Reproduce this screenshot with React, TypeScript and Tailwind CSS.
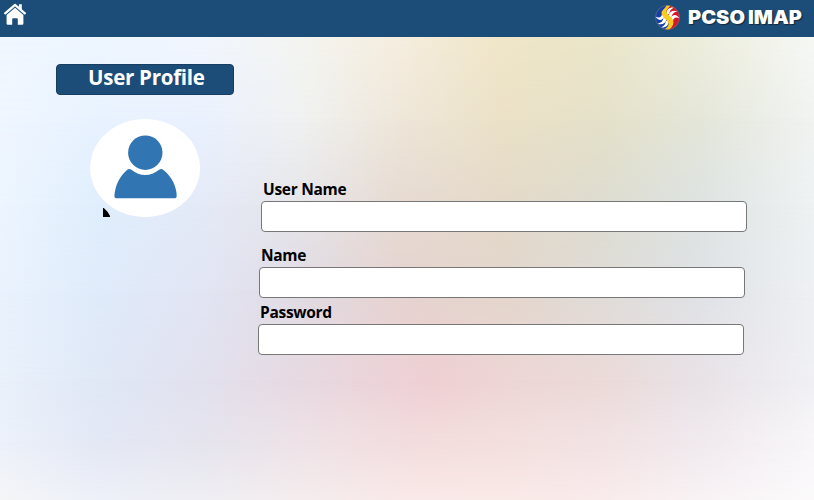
import React from "react";

const sweeps = [
  "M24 19C21 9 29 4 38 5C31 9 28 13 29 18Z",
  "M27 22C29 12 37 9 45 13C37 14 34 18 33 25Z",
  "M31 27C36 17 44 19 49 27C42 23 37 25 36 32Z",
];

function SwirlLogo() {
  return (
    <svg viewBox="0 0 50 50" className="block size-[25px]" aria-hidden="true">
      <defs>
        <clipPath id="disc">
          <circle cx="25" cy="25" r="24" />
        </clipPath>
      </defs>
      <g clipPath="url(#disc)">
        <path d="M25 0H0v50h25L30 34 20 16Z" fill="#123fae" />
        <path d="M25 0h25v50H25L30 34 20 16Z" fill="#d4152b" />
        <g fill="#fff">
          {sweeps.map((d) => <path key={d} d={d} />)}
          <g transform="rotate(180 25 25)">
            {sweeps.map((d) => <path key={d} d={d} />)}
          </g>
        </g>
        <path
          d="M22 0H31C29 5 23 8 23 13C24 20 37 25 37 35C36 43 31 47 27 50H18C24 45 28 42 27 37C26 30 13 25 13 15C14 9 24 5 22 0Z"
          fill="#fbcb1d"
        />
      </g>
      <circle cx="25" cy="25" r="24" fill="none" stroke="#98806f" strokeWidth="1" />
    </svg>
  );
}

function HomeIcon() {
  return (
    <svg viewBox="0 0 22 22" className="block size-[22px]" aria-hidden="true">
      <path d="M1.200 10.300 11 1.900l9.800 8.400" fill="none" stroke="#fff" strokeWidth="2.300" strokeLinecap="round" strokeLinejoin="round" />
      <path d="M15 1.300h2.800v6.500L15 5.400Z" fill="#fff" />
      <path d="M2.600 11.900 11 4.700l8.400 7.200V20.500q0 1.300-1.300 1.300h-4.300v-5.600q0-1-1-1H9.200q-1 0-1 1v5.600H3.900q-1.300 0-1.300-1.300Z" fill="#fff" />
    </svg>
  );
}

function Avatar() {
  return (
    <div className="relative ml-[34px] mt-6 h-[98px] w-[110px] rounded-[50%] bg-white">
      <svg viewBox="0 0 110 98" className="block size-full" fill="#3175b3" aria-hidden="true">
        <circle cx="55.300" cy="33.700" r="17.200" />
        <path d="M41 50.500Q55 61.500 69.500 50.500Q71.500 49.300 74 51.500C82 58 86.700 68 86.700 77Q86.700 79.300 84 79.300H27Q24.400 79.300 24.400 77C25 66 30 57 37 51Q39 49.300 41 50.500Z" />
      </svg>
      <svg viewBox="0 0 7 9" className="absolute left-[13px] top-[89px] h-[9px] w-[7px]" aria-hidden="true">
        <path d="M0 0h.8Q5 3.500 7 8v1H0Z" fill="#000" />
      </svg>
    </div>
  );
}

/* Soft colour wash: each band is a horizontal gradient that fades in over the one above it. */
function Wash() {
  return (
    <div className="absolute inset-0" aria-hidden="true">
      <div className="absolute inset-0 bg-[linear-gradient(90deg,#f0f7ff,#eef6ff_12%,#f2f6fe_25%,#f4f5f1_37%,#f6eedf_49%,#f0e6c8_62%,#ebe6ca_74%,#eeeedd_86%,#f6f8f5)]" />
      <div className="absolute inset-0 bg-[linear-gradient(90deg,#eff6ff,#e8f2ff_12%,#eaf1fe_25%,#f0f1f1_37%,#eee6d9_49%,#ebe1c7_62%,#e5e1c9_74%,#e4e6d9_86%,#f0f3f1)] [mask-image:linear-gradient(transparent_0px,black_83px)]" />
      <div className="absolute inset-0 bg-[linear-gradient(90deg,#edf5ff,#dfeefd_12%,#e4eaf7_25%,#e6e5e9_37%,#e6dad2_49%,#e4d9c9_62%,#dddcd0_74%,#dde3e2_86%,#eef2f3)] [mask-image:linear-gradient(transparent_83px,black_168px)]" />
      <div className="absolute inset-0 bg-[linear-gradient(90deg,#eaf2fd,#dfebfb_12%,#e2e5f4_25%,#e1dbe3_37%,#e6d3d0_49%,#e3d6cc_62%,#dfdcd8_74%,#dfe2e6_86%,#eef0f3)] [mask-image:linear-gradient(transparent_168px,black_253px)]" />
      <div className="absolute inset-0 bg-[linear-gradient(90deg,#e9f1fb,#e0e8f6_12%,#e2e1ee_25%,#e7d9e1_37%,#efcfd3_53%,#edd5d5_62%,#ebdad8_74%,#e8e2e7_86%,#f0f0f4)] [mask-image:linear-gradient(transparent_253px,black_343px)]" />
      <div className="absolute inset-0 bg-[linear-gradient(90deg,#ecf1fa,#e3e8f5_12%,#e5e4ee_25%,#eee2e7_37%,#f3dcdd_51%,#f3dfde_62%,#f2e2e3_74%,#f0e9ee_86%,#f8f6f9)] [mask-image:linear-gradient(transparent_343px,black_403px)]" />
      <div className="absolute inset-0 bg-[linear-gradient(90deg,#f4f5f7,#edf0f8_12%,#efeef3_25%,#f4eced_37%,#f9e9e8_49%,#f9e9e7_62%,#f9ebeb_74%,#f8f2f4_86%,#fbfafb)] [mask-image:linear-gradient(transparent_403px,black_463px)]" />
    </div>
  );
}

function Field({ label, className }: { label: string; className: string }) {
  return (
    <label className={`block w-[486px] ${className}`}>
      <span className="block h-[23px] pl-0.5 text-[15.500px] leading-[22px] font-bold tracking-[-0.3px] text-black">{label}</span>
      <input className="block h-[31px] w-full rounded-[4px] border border-[#777] bg-white px-2 outline-none" />
    </label>
  );
}

export default function App() {
  return (
    <div className="flex h-[500px] w-[814px] flex-col overflow-hidden font-['Open_Sans',sans-serif]">
      <header className="flex h-[37px] shrink-0 items-start justify-between bg-[#1c4d78] pl-1 pr-[11px]">
        <div className="pt-[3px]"><HomeIcon /></div>
        <div className="flex items-center pt-1">
          <SwirlLogo />
          <svg viewBox="0 0 115 26" className="ml-2 h-[26px] w-[115px] overflow-visible fill-white font-['Inter',sans-serif] text-[19px] font-black [text-shadow:1px_1px_1px_#16283b]">
            <text x="0" y="19.500" textLength="57" lengthAdjust="spacingAndGlyphs">PCSO</text>
            <text x="60" y="19.500" textLength="54" lengthAdjust="spacingAndGlyphs">IMAP</text>
          </svg>
        </div>
      </header>
      <main className="relative flex-1">
        <Wash />
        <div className="relative flex items-start pl-14">
          <section className="w-[178px] shrink-0 pt-[27px]">
            <h1 className="h-[31px] rounded-[4px] border border-[#163d62] bg-[#1c4d78] pl-[31px] text-[20.500px] leading-[24px] font-bold tracking-[-0.27px] whitespace-nowrap text-white">User Profile</h1>
            <Avatar />
          </section>
          <form className="flex flex-col pl-6 pt-[141px]">
            <Field label="User Name" className="ml-[3px]" />
            <Field label="Name" className="ml-px mt-3" />
            <Field label="Password" className="mt-[3px]" />
          </form>
        </div>
      </main>
    </div>
  );
}
